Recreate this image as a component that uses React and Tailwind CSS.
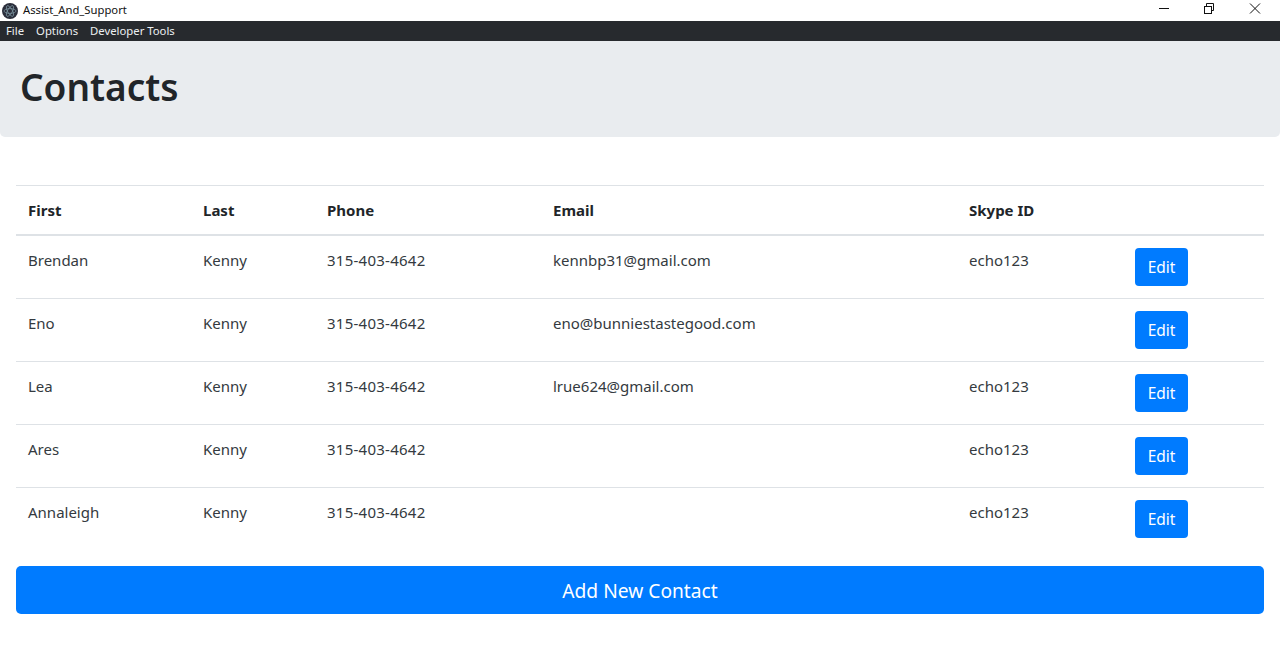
const rows = [
  ["Brendan", "Kenny", "315-403-4642", "kennbp31@gmail.com", "echo123"],
  ["Eno", "Kenny", "315-403-4642", "eno@bunniestastegood.com", ""],
  ["Lea", "Kenny", "315-403-4642", "lrue624@gmail.com", "echo123"],
  ["Ares", "Kenny", "315-403-4642", "", "echo123"],
  ["Annaleigh", "Kenny", "315-403-4642", "", "echo123"],
];
const font = "font-['Noto_Sans','Open_Sans',sans-serif]";

export default function App() {
  return (
    <div className={`${font} h-[649px] overflow-hidden bg-white text-[#212529]`}>
      <div className="flex h-[21px] items-center justify-between bg-white">
        <div className="flex items-center">
          <svg width="16" height="16" viewBox="0 0 16 16" className="ml-[2px]">
            <circle cx="8" cy="8" r="8" fill="#2b2e3b" />
            <g fill="none" stroke="#7f9aa5" strokeWidth="0.7">
              <ellipse cx="8" cy="8" rx="6" ry="2.4" />
              <ellipse cx="8" cy="8" rx="6" ry="2.4" transform="rotate(60 8 8)" />
              <ellipse cx="8" cy="8" rx="6" ry="2.4" transform="rotate(120 8 8)" />
            </g>
          </svg>
          <span className="ml-[5px] pb-[2px] text-[11.25px] leading-[19px] text-[#111]">Assist_And_Support</span>
        </div>
        <div className="mr-[2px] flex items-center">
          <svg width="46" height="21" viewBox="0 0 46 21">
            <path d="M19 8.5h10" stroke="#111" strokeWidth="1" />
          </svg>
          <svg width="46" height="21" viewBox="0 0 46 21">
            <rect x="18.5" y="6.5" width="7" height="7" fill="#fff" stroke="#111" />
            <path d="M20.5 6.5v-3h7v7h-2" fill="none" stroke="#111" />
          </svg>
          <svg width="46" height="21" viewBox="0 0 46 21">
            <path d="M18 3.5l10 10M28 3.5l-10 10" stroke="#111" strokeWidth="1" fill="none" />
          </svg>
        </div>
      </div>
      <div className="flex h-[20px] items-center bg-[#272a2e] text-[11.3px] leading-[20px] text-[#eceff1]">
        <span className="ml-[6px]">File</span>
        <span className="ml-[12px]">Options</span>
        <span className="ml-[12px]">Developer Tools</span>
      </div>
      <div className="flex h-[96px] items-center rounded-b-[5px] bg-[#e9ecef] pb-[5px] pl-[20px]">
        <h1 className="text-[37px] leading-[46px] font-semibold">Contacts</h1>
      </div>
      <div className="px-[16px] pt-[48px]">
        <table className="w-full table-fixed border-collapse text-[15px]">
          <colgroup>
            <col className="w-[175px]" />
            <col className="w-[124px]" />
            <col className="w-[226px]" />
            <col className="w-[416px]" />
            <col className="w-[166px]" />
            <col />
          </colgroup>
          <thead>
            <tr className="h-[49px] border-t border-b-2 border-[#dee2e6]">
              {["First", "Last", "Phone", "Email", "Skype ID", ""].map((h, i) => (
                <th key={i} className="px-[12px] text-left align-middle font-bold">{h}</th>
              ))}
            </tr>
          </thead>
          <tbody>
            {rows.map((r, idx) => (
              <tr key={r[0]} className={`${idx === 0 ? "h-[64px]" : "h-[63px]"} border-b border-[#dee2e6] last:border-b-0`}>
                {r.map((c, i) => (
                  <td key={i} className={`px-[12px] pt-[12px] align-top leading-[24px] text-[#343a40] ${i === 2 ? "tracking-[0.25px]" : ""}`}>{c}</td>
                ))}
                <td className="px-[12px] pt-[12px] align-top">
                  <button className="flex h-[38px] w-[53px] items-center justify-center rounded-[4px] bg-[#007bff] pt-[2px] text-[15.5px] text-white">Edit</button>
                </td>
              </tr>
            ))}
          </tbody>
        </table>
        <button className="mt-[15px] flex h-[48px] w-full items-center justify-center rounded-[5px] bg-[#007bff] pt-[4px] text-[19.2px] text-white">Add New Contact</button>
      </div>
    </div>
  );
}
